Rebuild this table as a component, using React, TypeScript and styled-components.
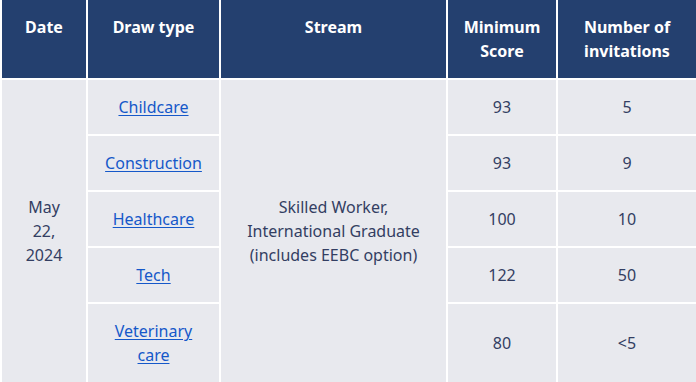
import React from "react";
import styled, { createGlobalStyle } from "styled-components";

const GlobalStyle = createGlobalStyle`
  html, body {
    margin: 0;
    padding: 0;
    background: #ffffff;
  }
  body {
    font-family: "Noto Sans", "Open Sans", sans-serif;
  }
`;

interface Draw {
  type: string;
  score: string;
  invitations: string;
}

const draws: Draw[] = [
  { type: "Childcare", score: "93", invitations: "5" },
  { type: "Construction", score: "93", invitations: "9" },
  { type: "Healthcare", score: "100", invitations: "10" },
  { type: "Tech", score: "122", invitations: "50" },
  { type: "Veterinary care", score: "80", invitations: "<5" },
];

const Table = styled.table`
  width: 696px;
  table-layout: fixed;
  border-collapse: collapse;
  font-size: 16px;
  line-height: 24px;
  color: #333e62;
`;

const HeadCell = styled.th`
  background: #24406f;
  color: #ffffff;
  font-weight: 700;
  text-align: center;
  vertical-align: top;
  padding: 15px 12px 15px;
  border: 2px solid #ffffff;
  border-top: none;
`;

const Cell = styled.td`
  background: #e8e9ee;
  text-align: center;
  vertical-align: middle;
  padding: 15px 15px;
  border: 2px solid #ffffff;
`;

const DrawLink = styled.a`
  color: #1558c9;
  text-decoration: underline;
  text-underline-offset: 2px;
`;

const App: React.FC = () => (
  <>
    <GlobalStyle />
    <Table>
      <colgroup>
        <col style={{ width: 86 }} />
        <col style={{ width: 133 }} />
        <col style={{ width: 227 }} />
        <col style={{ width: 110 }} />
        <col style={{ width: 140 }} />
      </colgroup>
      <thead>
        <tr>
          <HeadCell>Date</HeadCell>
          <HeadCell>Draw type</HeadCell>
          <HeadCell>Stream</HeadCell>
          <HeadCell>Minimum Score</HeadCell>
          <HeadCell>Number of invitations</HeadCell>
        </tr>
      </thead>
      <tbody>
        {draws.map((d, i) => (
          <tr key={d.type}>
            {i === 0 && (
              <Cell rowSpan={draws.length}>
                May
                <br />
                22,
                <br />
                2024
              </Cell>
            )}
            <Cell>
              <DrawLink href="#">{d.type}</DrawLink>
            </Cell>
            {i === 0 && (
              <Cell rowSpan={draws.length}>
                Skilled Worker, International Graduate (includes EEBC option)
              </Cell>
            )}
            <Cell>{d.score}</Cell>
            <Cell>{d.invitations}</Cell>
          </tr>
        ))}
      </tbody>
    </Table>
  </>
);

export default App;
